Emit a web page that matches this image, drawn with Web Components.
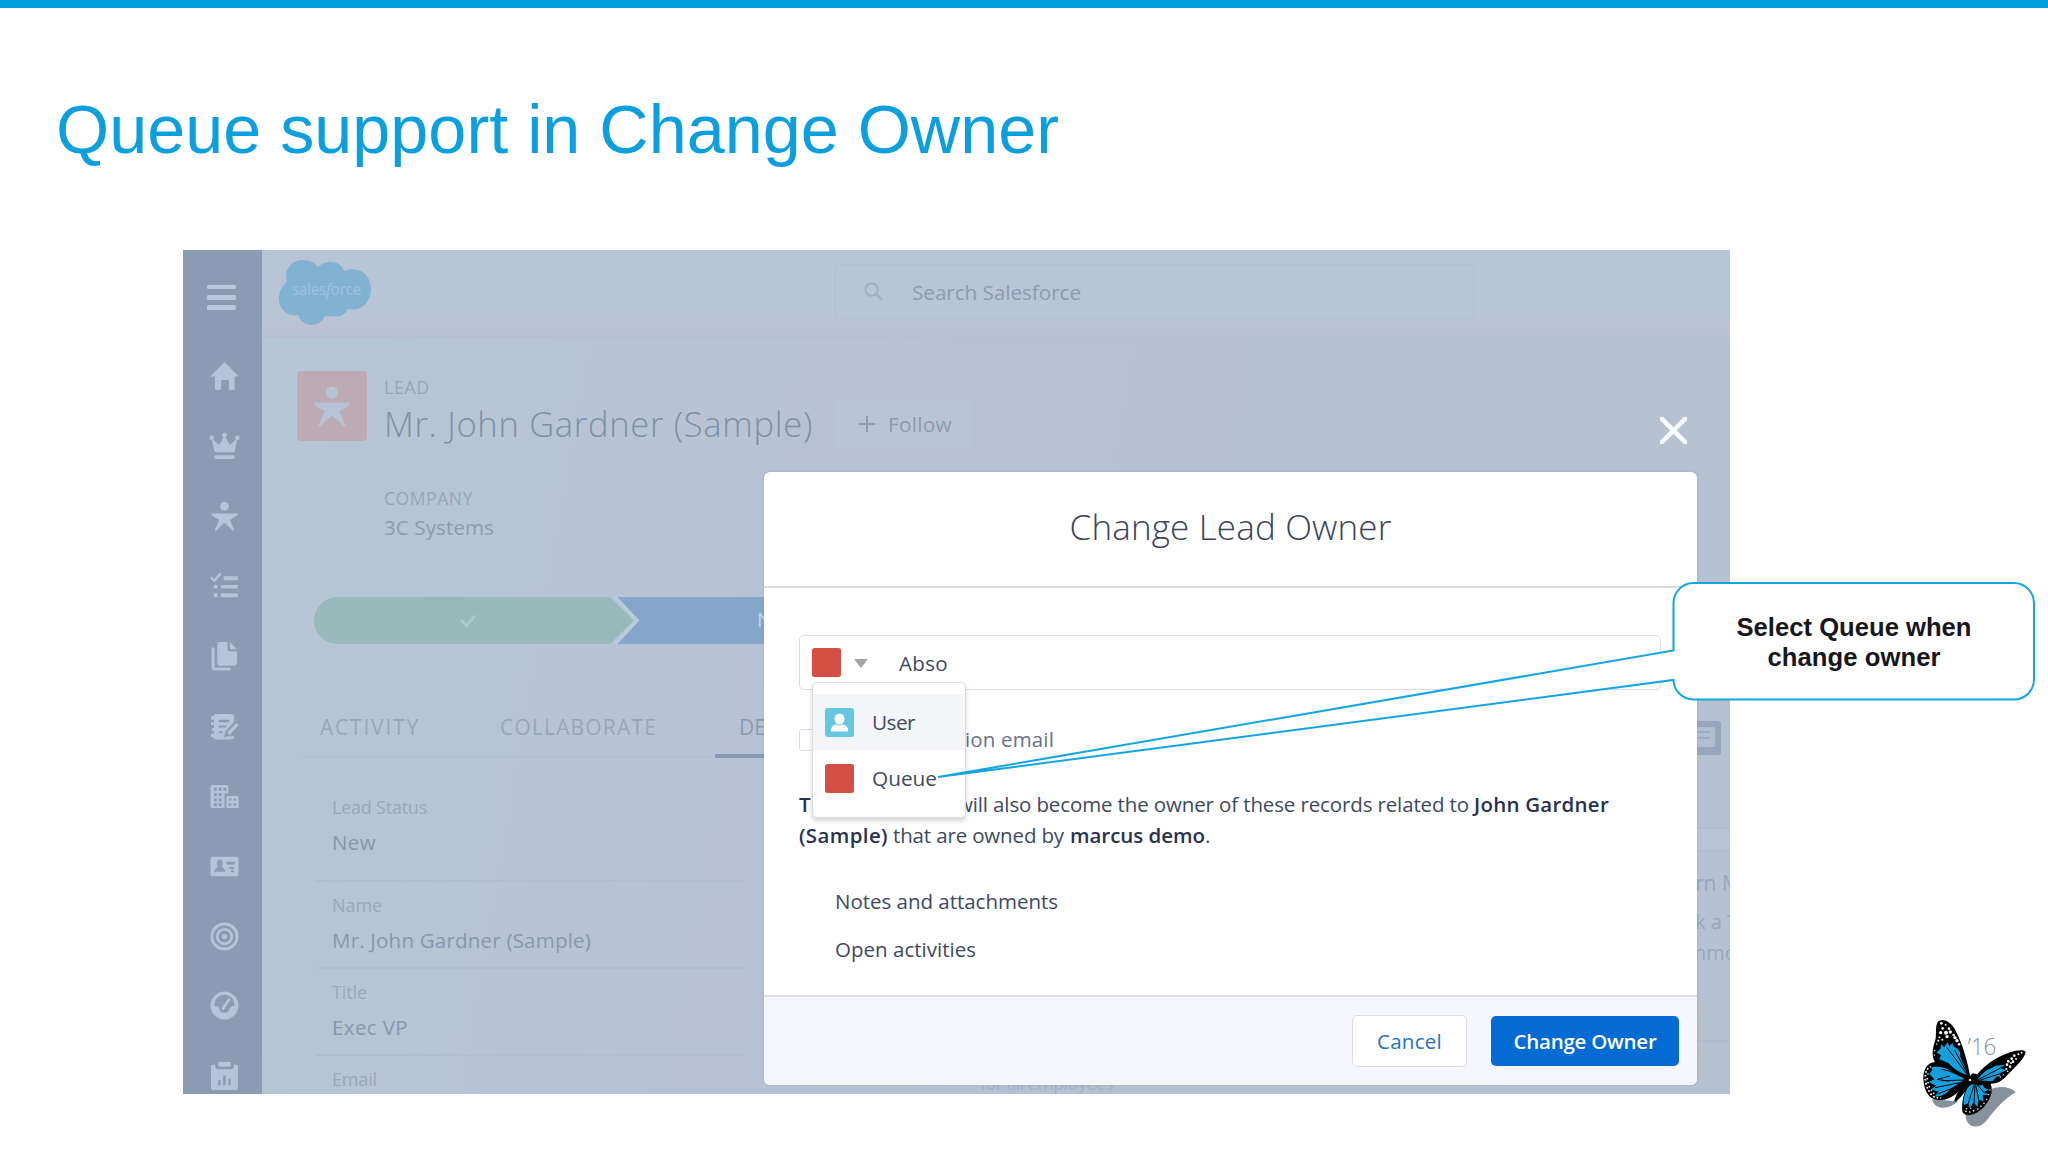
<!DOCTYPE html>
<html lang="en">
<head>
<meta charset="utf-8">
<title>Queue support in Change Owner</title>
<style>
  html, body {
    margin: 0;
    padding: 0;
    background: #fefefe;
  }
</style>
</head>
<body>
<slide-page heading="Queue support in Change Owner">
  <app-shot>
    <owner-modal slot="overlay"></owner-modal>
  </app-shot>
  <call-out slot="notes">
    <fit-text w="235">Select Queue when</fit-text>
    <fit-text w="173">change owner</fit-text>
  </call-out>
  <butterfly-mark slot="notes"></butterfly-mark>
</slide-page>

<script>
const ICONS = {
  home: '<path d="M15 0 L30 15 H25.500 V28 Q25.500 29 24.500 29 H19.500 V20 Q19.500 18.500 18 18.500 H13 Q11.500 18.500 11.500 20 V29 H6 Q5 29 5 28 V15 H0 Z"/>',
  crown: '<path d="M1.500 6 L4.500 20 Q4.700 21 6 21 H24 Q25.300 21 25.500 20 L28.500 6 L22 12.500 Q20.500 13.500 19.500 12 L15 3 L10.500 12 Q9.500 13.500 8 12.500 Z"/><circle cx="1.800" cy="6" r="2.300"/><circle cx="15" cy="3" r="2.500"/><circle cx="28.200" cy="6" r="2.300"/><rect x="4.500" y="24" width="21" height="4" rx="1.500"/>',
  lead: '<circle cx="15" cy="4.500" r="4.500"/><path d="M1.500 12 H28.500 Q29.500 13 28.500 13.800 L20.500 18.500 L25 29 Q24.500 30 23.500 29.500 L15 21.500 L6.500 29.500 Q5.500 30 5 29 L9.500 18.500 L1.500 13.800 Q.5 13 1.500 12Z"/>',
  list: '<path d="M1 5.500 L4.500 9 L11 1.500" fill="none" stroke="currentColor" stroke-width="2.600"/><rect x="14" y="4.500" width="15" height="4" rx="1.500"/><rect x="4" y="13.500" width="4" height="3.500" rx="1"/><rect x="11" y="13.500" width="18" height="3.500" rx="1.500"/><rect x="4" y="22" width="4" height="4" rx="1"/><rect x="11" y="22" width="18" height="4" rx="1.500"/>',
  files: '<path d="M10 0 H18 V6.500 Q18 9.500 21 9.500 H28 V22 Q28 24.500 25.500 24.500 H10 Q7.500 24.500 7.500 22 V2.500 Q7.500 0 10 0Z"/><path d="M20.500 0 L28 7.500 H22 Q20.500 7.500 20.500 6Z"/><path d="M3.200 7 V25.500 Q3.200 28 6 28 H20" fill="none" stroke="currentColor" stroke-width="3.200" stroke-linecap="round"/>',
  notes: '<path fill-rule="evenodd" d="M6 2 H22 Q25 2 25 5 V10 L16 20 L14.500 26 L19 25 H25 V26 Q24 28.500 22 28.500 H6 Q3.500 28.500 3.500 26 H1 V22.500 H4 V19.500 H2 V16.500 H4 V13.500 H1 V10.500 H4 V8 H1 V4.500 H3.500 Q4 2 6 2Z M9 8 V10.500 H20 V8Z M9 14 V16 H17 V14Z M9 20 V22 H13 V20Z"/><path d="M19 22.500 L28.500 12.500" stroke="currentColor" stroke-width="3.400"/>',
  building: '<path fill-rule="evenodd" d="M2 3 H17 Q19 3 19 5 V12 H15 V27 H2 Q.5 27 .5 25 V5 Q.5 3 2 3Z M4 6 V9 H7 V6Z M9 6 V9 H12 V6Z M14 6 V9 H17 V6Z M4 11.500 V14.500 H7 V11.500Z M9 11.500 V14.500 H12 V11.500Z M4 17 V20 H7 V17Z M9 17 V20 H12 V17Z M4 22 V25 H7 V22Z M9 22 V25 H12 V22Z M18 14.500 H28 Q29.500 14.500 29.500 16 V26 Q29.500 27 28 27 H17 V15.500Z M19.500 17 V19.500 H22 V17Z M24.500 17 V19.500 H27 V17Z M19.500 22 V24.500 H22 V22Z M24.500 22 V24.500 H27 V22Z"/>',
  contact: '<path fill-rule="evenodd" d="M2.500 5 H27.500 Q29.500 5 29.500 7 V23 Q29.500 25 27.500 25 H2.500 Q.5 25 .5 23 V7 Q.5 5 2.500 5Z M10 8 Q7 8 7 11.500 Q7 14 8.500 15.500 Q4.500 17 4.500 20.500 H16 Q16 17 12 15.500 Q13.200 14 13.200 11.500 Q13.200 8 10 8Z M17 10 V13 H26 V10Z M20 15.500 V17.500 H25 V15.500Z M21.500 19 V21 H25 V19Z"/>',
  target: '<g fill="none" stroke="currentColor"><circle cx="15" cy="15" r="13" stroke-width="3"/><circle cx="15" cy="15" r="7.500" stroke-width="2.800"/></g><circle cx="15" cy="15" r="2.700"/>',
  gauge: '<path fill-rule="evenodd" d="M15 .5 A14.500 14.500 0 1 1 14.900 .5Z M15 4 Q5 4.500 4.500 15.500 Q8 15 9.500 17.500 Q10 22.500 15 22.500 Q20 22.500 20.500 17.500 Q22 15 25.500 15.500 Q25 4.500 15 4Z"/><path d="M13.500 18 L19.500 9" stroke="currentColor" stroke-width="3" stroke-linecap="round"/>',
  report: '<path fill-rule="evenodd" d="M3 4 H5.500 V5.500 Q5.500 8.500 8.500 8.500 H21.500 Q24.500 8.500 24.500 5.500 V4 H27 Q29 4 29 6 V28 Q29 30 27 30 H3 Q1 30 1 28 V6 Q1 4 3 4Z M8.500 20 V25 H11 V20Z M13.700 15 V25 H16.300 V15Z M19 18 V25 H21.500 V18Z"/><rect x="8.500" y="1" width="13" height="5" rx="1.500"/>'
};

class AppIcon extends HTMLElement {
  constructor() {
    super();
    this.attachShadow({ mode: "open" });
  }

  connectedCallback() {
    this.shadowRoot.innerHTML = `
      <style>
        :host { display: block; width: 30px; height: 30px; }
        svg { display: block; width: 100%; height: 100%; overflow: visible; fill: currentColor; }
      </style>
      <svg viewBox="0 0 30 30">${ICONS[this.getAttribute("name")] || ""}</svg>
    `;
  }
}

class SideNav extends HTMLElement {
  constructor() {
    super();
    this.attachShadow({ mode: "open" });
  }

  connectedCallback() {
    const names = ["home", "crown", "lead", "list", "files", "notes", "building", "contact", "target", "gauge", "report"];
    this.shadowRoot.innerHTML = `
      <style>
        :host {
          display: block;
          box-sizing: border-box;
          width: 79px;
          height: 100%;
          flex: none;
          padding-top: 35px;
          background: #8a9bb3;
          color: #b4c5d9;
        }
        .burger {
          display: flex;
          flex-direction: column;
          gap: 5.800px;
          margin-left: 24px;
          width: 29px;
          height: 57px;
        }
        .burger i { height: 4.400px; border-radius: 1.500px; background: #b4c9dd; }
        nav { display: flex; flex-direction: column; }
        .item { height: 69.900px; display: flex; align-items: center; padding-left: 26.500px; }
        .item app-icon { width: 29px; height: 29px; }
      </style>
      <div class="burger"><i></i><i></i><i></i></div>
      <nav>${names.map((n) => `<div class="item"><app-icon name="${n}"></app-icon></div>`).join("")}</nav>
    `;
  }
}

class TopBar extends HTMLElement {
  constructor() {
    super();
    this.attachShadow({ mode: "open" });
  }

  connectedCallback() {
    this.shadowRoot.innerHTML = `
      <style>
        :host {
          display: flex;
          box-sizing: border-box;
          height: 88px;
          padding: 10px 0 0 17px;
          background: linear-gradient(#b8c5d7 0 68px, #bbc2d4 74px 84px, #b5bfd1 88px);
        }
        svg { display: block; overflow: visible; }
        .logo { width: 92px; height: 65px; flex: none; }
        .logo text { font: 500 17px "Open Sans", sans-serif; fill: #a0c3db; }
        .search {
          box-sizing: border-box;
          display: flex;
          align-items: center;
          width: 641px;
          height: 55px;
          margin: 4px 0 0 463px;
          padding-left: 28px;
          border: 2px solid #b5c2d4;
          border-radius: 4px;
          color: #8c9bb0;
          font-size: 20.800px;
        }
        .search svg { width: 19px; height: 19px; margin-right: 29px; }
      </style>
      <svg class="logo" viewBox="0 0 92 65">
        <path fill="#81b2d1" d="M8 22 C4 7 15 0 24 0 C31 0 36 3 39 7 C43 3 48 2 52 2 C58 2 63 5 65 11 C81 5 92 16 92 29 C92 43 81 52 69 49 C66 55 60 58 54 56 C50 57 48 56 46 56 C43 62 38 65 33 65 C26 65 21 61 19 55 C8 57 0 49 0 39 C0 31 3 26 8 22Z"/>
        <text x="13" y="35" textLength="69" lengthAdjust="spacingAndGlyphs">sales<tspan font-style="italic">f</tspan>orce</text>
      </svg>
      <div class="search">
        <svg viewBox="0 0 20 20" fill="none" stroke="#a3b1c4" stroke-width="2.300"><circle cx="8" cy="8" r="6.500"/><path d="M12.500 12.500 L19 19"/></svg>
        <fit-text w="169">Search Salesforce</fit-text>
      </div>
    `;
  }
}

class RecordHeader extends HTMLElement {
  constructor() {
    super();
    this.attachShadow({ mode: "open" });
  }

  connectedCallback() {
    this.shadowRoot.innerHTML = `
      <style>
        :host { display: flex; gap: 17px; height: 226px; padding: 33px 0 0 35px; }
        .avatar {
          display: flex;
          align-items: center;
          justify-content: center;
          width: 70px;
          height: 70px;
          flex: none;
          border-radius: 4px;
          background: #bcabb3;
          color: #b8c4d5;
        }
        .avatar app-icon { width: 40px; height: 41px; }
        .label { height: 20px; line-height: 20px; font-size: 17.500px; color: #97a5b8; }
        .value { height: 22px; line-height: 22px; font-size: 20.500px; color: #8b9bb0; }
        .head { padding-top: 6px; }
        .name { display: flex; align-items: center; gap: 23px; height: 40px; margin-top: 7px; }
        h2 { margin: 0; font-size: 34.500px; line-height: 40px; font-weight: 350; color: #7f8fa6; }
        .follow {
          box-sizing: border-box;
          display: flex;
          align-items: center;
          gap: 13px;
          width: 136px;
          height: 48px;
          padding-left: 23px;
          border-radius: 4px;
          background: #b9c4d6;
          color: #8b9bb1;
          font-size: 20.800px;
        }
        .company { margin-top: 44px; }
        .company .value { margin-top: 8px; }
      </style>
      <div class="avatar"><app-icon name="lead"></app-icon></div>
      <div>
        <div class="head">
          <div class="label"><fit-text w="46">LEAD</fit-text></div>
          <div class="name">
            <h2><fit-text w="429">Mr. John Gardner (Sample)</fit-text></h2>
            <div class="follow">
              <svg width="16" height="16" viewBox="0 0 16 16" stroke="currentColor" stroke-width="2"><path d="M8 0V16M0 8H16"/></svg>
              <fit-text w="64">Follow</fit-text>
            </div>
          </div>
        </div>
        <div class="company">
          <div class="label"><fit-text w="89">COMPANY</fit-text></div>
          <div class="value"><fit-text w="110">3C Systems</fit-text></div>
        </div>
      </div>
    `;
  }
}

class StagePath extends HTMLElement {
  constructor() {
    super();
    this.attachShadow({ mode: "open" });
  }

  connectedCallback() {
    this.shadowRoot.innerHTML = `
      <style>
        :host { display: block; height: 47px; margin: 0 0 0 52px; }
        svg { display: block; width: 1416px; height: 47px; }
        text { font: 20px "Open Sans", sans-serif; fill: #c3d4e6; }
      </style>
      <svg viewBox="0 0 1416 47">
        <path fill="#97b9ba" d="M23.500 0 H293 Q296 0 298 2 L320 23.500 L298 45 Q296 47 293 47 H23.500 A23.500 23.500 0 0 1 23.500 0Z"/>
        <path fill="#85a5ca" d="M303 0 H1416 V47 H303 L324 23.500Z"/>
        <path fill="none" stroke="#b7ccdb" stroke-width="3.500" d="M301 0 L323 23.500 L301 47"/>
        <path fill="none" stroke="#a9cbc6" stroke-width="2.600" d="M147 23 L152.500 28.500 L161 18.500"/>
        <text x="443" y="30">New</text>
      </svg>
    `;
  }
}

class RecordField extends HTMLElement {
  constructor() {
    super();
    this.attachShadow({ mode: "open" });
  }

  connectedCallback() {
    this.shadowRoot.innerHTML = `
      <style>
        :host {
          display: block;
          box-sizing: border-box;
          height: 87px;
          padding: 13px 0 0 16px;
          border-bottom: 2px solid #b1bed0;
        }
        .label { height: 20px; line-height: 20px; font-size: 18px; color: #9aa8ba; }
        .value { height: 24px; line-height: 24px; margin-top: 13px; font-size: 20.500px; color: #8797ad; }
      </style>
      <div class="label"><fit-text w="${this.getAttribute("lw")}">${this.getAttribute("label")}</fit-text></div>
      <div class="value"><slot></slot></div>
    `;
  }
}

class RecordDetail extends HTMLElement {
  constructor() {
    super();
    this.attachShadow({ mode: "open" });
  }

  connectedCallback() {
    this.shadowRoot.innerHTML = `
      <style>
        :host { display: flex; justify-content: space-between; padding-top: 53px; }
        .tabs {
          display: flex;
          box-sizing: border-box;
          width: 700px;
          height: 61px;
          margin-left: 38px;
          border-bottom: 2px solid #b3c0d1;
          font-size: 21px;
          line-height: 61px;
          color: #98a6b9;
        }
        .tabs div { box-sizing: border-box; height: 61px; padding-left: 20px; }
        .tabs div:first-child { width: 180px; }
        .tabs div:nth-child(2) { width: 235px; }
        .tabs .on { width: 285px; padding-left: 24px; color: #8a9ab1; border-bottom: 4px solid #8799b4; }
        .fields { width: 430px; margin: 26px 0 0 54px; }
        .fields record-field:first-child { height: 98px; }
        .side { width: 90px; flex: none; overflow: hidden; font-size: 20px; line-height: 24px; color: #9aa7ba; white-space: nowrap; }
        .book { box-sizing: border-box; width: 45px; height: 34px; margin: 24px 0 0 36px; border: 6px solid #98a6bc; border-radius: 3px; background: #b0bed0; border-bottom-width: 8px; }
        .book i { display: block; height: 2px; margin: 4px 5px 0 10px; background: #9dabc0; }
        .rule { box-sizing: border-box; height: 25px; margin-top: 72px; border: solid #b2becf; border-width: 2px 0; background: #b8c4d4; }
        .side p { margin: 0; width: 130px; }
        .rule2 { height: 2px; margin-top: 75px; background: #b0bccd; }
      </style>
      <div>
        <div class="tabs">
          <div><fit-text w="100">ACTIVITY</fit-text></div>
          <div><fit-text w="157">COLLABORATE</fit-text></div>
          <div class="on">DETAILS</div>
        </div>
        <div class="fields">
          <record-field label="Lead Status" lw="95"><fit-text w="44">New</fit-text></record-field>
          <record-field label="Name" lw="50"><fit-text w="259">Mr. John Gardner (Sample)</fit-text></record-field>
          <record-field label="Title" lw="35"><fit-text w="76">Exec VP</fit-text></record-field>
          <record-field label="Email" lw="45"></record-field>
        </div>
      </div>
      <div class="side">
        <div class="book"><i></i><i></i></div>
        <div class="rule"></div>
        <p style="margin-top:19px;padding-left:55px;font-size:21px">rn M</p>
        <p style="margin-top:15px;padding-left:55px">k a T</p>
        <p style="margin-top:7px;padding-left:54px">nmo</p>
        <div class="rule2"></div>
      </div>
    `;
  }
}

class AppShot extends HTMLElement {
  constructor() {
    super();
    this.attachShadow({ mode: "open" });
  }

  connectedCallback() {
    this.shadowRoot.innerHTML = `
      <style>
        :host {
          position: relative;
          display: flex;
          width: 1547px;
          height: 844px;
          overflow: hidden;
          font-family: "Open Sans", "Noto Sans", sans-serif;
          color: #8797ad;
        }
        main {
          flex: 1;
          min-width: 0;
          background: linear-gradient(100deg, #b5c6d4 0, #b7c4d4 20%, #b8c2d4 35%, #b7c1d2 60%, #b6c1d2 100%);
        }
        .under { position: absolute; left: 797px; bottom: -1px; font-size: 18px; line-height: 24px; color: #a6b2c4; }
      </style>
      <side-nav></side-nav>
      <main>
        <top-bar></top-bar>
        <record-header></record-header>
        <stage-path style="margin-top:-.5px"></stage-path>
        <record-detail></record-detail>
      </main>
      <div class="under"><fit-text w="133">for all employees</fit-text></div>
      <slot name="overlay"></slot>
    `;
  }
}

class OwnerMenu extends HTMLElement {
  constructor() {
    super();
    this.attachShadow({ mode: "open" });
  }

  connectedCallback() {
    this.shadowRoot.innerHTML = `
      <style>
        :host {
          position: absolute;
          left: 48px;
          top: 210px;
          box-sizing: border-box;
          width: 154px;
          height: 136px;
          padding-top: 11px;
          border: 1.500px solid #dcdde2;
          border-radius: 5px;
          background: #fefefe;
          box-shadow: 0 3px 4px rgba(0, 0, 0, .16);
        }
        .row { display: flex; align-items: center; gap: 18px; height: 56px; padding-left: 12px; font-size: 20.800px; color: #414a60; }
        .row.on { background: #f4f5f9; }
        .sq { width: 29px; height: 29px; border-radius: 2.500px; background: #d25043; }
        .sq.user { background: #65c8e0; }
        svg { display: block; fill: #fff; }
      </style>
      <div class="row on">
        <div class="sq user"><svg width="29" height="29" viewBox="0 0 29 29"><ellipse cx="14.500" cy="11" rx="5" ry="5.500"/><path d="M6 23.500 Q5.500 17 11.500 16.500 Q14.500 18.500 17.500 16.500 Q23.500 17 23 23.500 Z"/></svg></div>
        <fit-text w="43">User</fit-text>
      </div>
      <div class="row"><div class="sq"></div><fit-text w="65">Queue</fit-text></div>
    `;
  }
}

class OwnerModal extends HTMLElement {
  constructor() {
    super();
    this.attachShadow({ mode: "open" });
  }

  connectedCallback() {
    this.shadowRoot.innerHTML = `
      <style>
        :host {
          position: absolute;
          left: 581px;
          top: 222px;
          display: flex;
          flex-direction: column;
          width: 933px;
          height: 613px;
          border-radius: 6px;
          background: #fefefe;
          color: #3f495f;
          font-size: 20.500px;
          box-shadow: 0 0 3px rgba(90, 105, 130, .25);
        }
        .close { position: absolute; right: 10px; top: -55px; width: 27px; height: 27px; }
        header {
          box-sizing: border-box;
          display: flex;
          align-items: center;
          justify-content: center;
          height: 116px;
          padding-bottom: 5px;
          border-bottom: 2.500px solid #dadbe0;
          font-size: 35px;
          font-weight: 350;
          color: #3a4459;
        }
        .body { flex: 1; padding: 47px 36px 0 35px; }
        .input {
          box-sizing: border-box;
          display: flex;
          align-items: center;
          height: 55px;
          padding-left: 12px;
          border: 1.500px solid #dcdde3;
          border-radius: 5px;
        }
        .sq { width: 29px; height: 29px; border-radius: 2.500px; background: #d54f43; }
        .caret { margin: 2px 31px 0 13px; border: 7px solid transparent; border-top: 9px solid #a3a5ab; border-bottom: 0; }
        .check { display: flex; align-items: center; height: 22px; margin-top: 39px; color: #68728a; }
        .check fit-text { margin-top: -2px; }
        .box { box-sizing: border-box; width: 23px; height: 22px; margin-right: 143px; border: 1.500px solid #dcdde3; border-radius: 3px; }
        .text { margin-top: 38px; line-height: 31px; }
        .line { display: flex; }
        b { color: #28324e; font-weight: 650; }
        ul { list-style: none; margin: 34px 0 0 36px; padding: 0; line-height: 32px; }
        li + li { margin-top: 16px; }
        footer {
          box-sizing: border-box;
          display: flex;
          align-items: center;
          justify-content: flex-end;
          gap: 24px;
          height: 90px;
          padding: 0 18px 0 0;
          border-top: 2.500px solid #dddfe4;
          border-radius: 0 0 6px 6px;
          background: #f4f6fb;
        }
        .btn { box-sizing: border-box; display: flex; align-items: center; justify-content: center; border-radius: 5px; }
        .cancel { width: 115px; height: 52px; border: 1.500px solid #dcdee4; background: #fefefe; color: #2474c0; font-weight: 500; }
        .ok { width: 188px; height: 50px; background: #036bd3; color: #fff; font-weight: 600; }
      </style>
      <svg class="close" viewBox="0 0 27 27" fill="none" stroke="#f8fbff" stroke-width="4.500" stroke-linecap="round"><path d="M1.500 1.500 L25.500 25.500 M25.500 1.500 L1.500 25.500"/></svg>
      <header><fit-text w="322">Change Lead Owner</fit-text></header>
      <div class="body">
        <div class="input"><div class="sq"></div><div class="caret"></div><fit-text w="49">Abso</fit-text></div>
        <div class="check"><div class="box"></div><fit-text w="89">ion email</fit-text></div>
        <div class="text">
          <div class="line"><b style="width:158px">T</b><fit-text w="512">will also become the owner of these records related to</fit-text><b style="margin-left:5px"><fit-text w="135">John Gardner</fit-text></b></div>
          <div class="line"><b><fit-text w="89">(Sample)</fit-text></b><fit-text w="171" style="margin:0 6px 0 5px">that are owned by</fit-text><b><fit-text w="135">marcus demo</fit-text></b>.</div>
        </div>
        <ul>
          <li><fit-text w="223">Notes and attachments</fit-text></li>
          <li><fit-text w="141">Open activities</fit-text></li>
        </ul>
      </div>
      <footer>
        <div class="btn cancel"><fit-text w="65">Cancel</fit-text></div>
        <div class="btn ok"><fit-text w="143">Change Owner</fit-text></div>
      </footer>
      <owner-menu></owner-menu>
    `;
  }
}

class CallOut extends HTMLElement {
  constructor() {
    super();
    this.attachShadow({ mode: "open" });
  }

  connectedCallback() {
    this.shadowRoot.innerHTML = `
      <style>
        :host {
          position: absolute;
          left: 936px;
          top: 582px;
          width: 1100px;
          height: 200px;
          font: 700 25.600px/30.500px "Liberation Sans", Arial, sans-serif;
          color: #17161b;
        }
        svg { position: absolute; left: 0; top: 0; }
        .label {
          position: relative;
          display: flex;
          flex-direction: column;
          align-items: center;
          width: 362px;
          margin-left: 737px;
          padding-top: 29.500px;
        }
      </style>
      <svg width="1100" height="200" viewBox="0 0 1100 200">
        <path fill="#fefefe" stroke="#12a5e2" stroke-width="2" d="M757.500 1 H1078 A20 20 0 0 1 1098 21 V97 A20 20 0 0 1 1078 117.500 H757.500 A20 20 0 0 1 737.500 98 L2 195 L737.500 68.500 V21 A20 20 0 0 1 757.500 1Z"/>
      </svg>
      <div class="label"><slot></slot></div>
    `;
  }
}

class ButterflyMark extends HTMLElement {
  constructor() {
    super();
    this.attachShadow({ mode: "open" });
  }

  connectedCallback() {
    // white speckles along the wing edges: x, y, radius
    const dots = [
      [124, 70, 4], [137, 74, 3], [128, 85, 4], [122, 98, 5], [138, 98, 6], [147, 86, 4], [151, 96, 5], [141, 110, 5],
      [118, 112, 3], [115, 122, 3], [161, 105, 4], [165, 113, 5], [171, 122, 5], [177, 133, 4], [127, 119, 3], [110, 132, 2],
      [104, 152, 2], [103, 165, 2], [91, 201, 2.500], [83, 206, 3], [78, 216, 3], [76, 227, 3], [84, 222, 2.500], [76, 239, 3],
      [82, 236, 2.500], [78, 251, 3], [84, 248, 2.500], [82, 263, 3], [88, 260, 2.500], [87, 273, 3], [94, 271, 2.500], [93, 283, 3],
      [101, 280, 2.500], [102, 290, 3], [112, 293, 2.500], [122, 294, 2], [365, 158, 3], [355, 163, 3], [343, 167, 4], [335, 176, 4],
      [348, 177, 3], [325, 184, 4], [333, 189, 3], [339, 185, 4], [321, 194, 4], [330, 200, 4], [319, 207, 3], [323, 214, 2.500],
      [310, 224, 2], [301, 231, 2], [270, 270, 2], [266, 284, 2], [260, 298, 2], [252, 310, 2.500], [243, 319, 2.500],
      [233, 327, 2.500], [221, 332, 2.500], [209, 336, 2.500], [198, 334, 2.500], [200, 326, 2], [212, 325, 2]
    ];
    this.shadowRoot.innerHTML = `
      <style>
        :host { position: absolute; left: 1900px; top: 1000px; width: 148px; height: 152px; }
        svg { display: block; width: 148px; height: 152px; }
        text { font: 300 69px "Open Sans", sans-serif; fill: #8d9095; }
      </style>
      <svg viewBox="0 0 444 456">
        <path fill="#87919b" d="M96 298 C103 330 145 332 174 304 Z"/>
        <path fill="#87919b" d="M196 340 C196 388 238 390 261 360 C285 328 315 295 348 276 C325 258 296 257 272 268 C270 310 240 345 196 340Z"/>
        <text x="203" y="165" textLength="86" lengthAdjust="spacingAndGlyphs">’16</text>
        <path d="M210 228 C204 190 188 130 163 85 C148 60 121 52 112 68 C104 84 112 110 103 130 C96 150 96 172 105 187 C84 186 69 208 70 237 C72 272 86 300 116 300 C150 303 180 276 207 240Z"/>
        <path d="M222 238 C240 205 285 172 330 157 C350 150 374 147 377 156 C373 177 344 203 322 225 C305 244 292 251 272 251 C282 276 268 308 242 330 C220 348 190 350 187 334 C184 306 192 276 206 248Z"/>
        <path d="M231 223 L218 220 L208 230 L196 246 C184 260 166 285 163 303 Q166 308 171 302 C188 286 204 265 215 249 L231 233Z"/>
        <g fill="#14a0df">
          <path d="M110 158 L122 145 L123 132 L133 142 L142 127 L148 139 L157 129 L160 139 C178 148 183 157 180 168 C188 188 199 208 202 225 C180 219 156 203 145 189 L118 178 L123 166Z"/>
          <path d="M88 222 L97 210 L94 201 C118 198 139 202 151 212 L190 233 L190 241 L151 268 C134 287 113 293 105 288 L116 275 L93 268 L108 257 L86 246 L103 238Z"/>
          <path d="M230 241 C245 222 260 208 274 205 L287 197 L316 194 L300 204 L319 211 L299 220 L302 230 L291 229 L277 244Z"/>
          <path d="M208 257 C220 250 229 251 233 257 L248 255 L254 264 L266 268 L254 275 L266 284 L248 286 L251 304 L236 300 L232 321 L220 307 L210 326 L205 310 L191 316 C190 294 196 270 208 257Z"/>
        </g>
        <path fill="none" stroke="#050608" stroke-width="3" d="M205 228 L140 142 M205 226 L164 150 M198 236 L148 213 L125 208 M150 228 L112 238 L148 244 M198 240 L125 242 M190 246 L105 263 M180 256 L115 281 M226 243 L300 205 M232 243 L304 220 M224 250 L204 312 M225 252 L222 312 M226 250 L237 303 M228 251 L255 280 L262 276"/>
        <circle cx="210" cy="240" r="4" fill="#d7d9dc"/>
        <g fill="#f5f7f8">${dots.map(([x, y, r]) => `<circle cx="${x}" cy="${y}" r="${r}"/>`).join("")}</g>
      </svg>
    `;
  }
}

class SlidePage extends HTMLElement {
  constructor() {
    super();
    this.attachShadow({ mode: "open" });
  }

  connectedCallback() {
    this.shadowRoot.innerHTML = `
      <style>
        :host {
          position: relative;
          display: block;
          box-sizing: border-box;
          width: 2048px;
          height: 1152px;
          overflow: hidden;
          border-top: 8px solid #009fe2;
          background: #fefefe;
        }
        h1 {
          margin: 0;
          height: 242px;
          padding: 81px 0 0 56px;
          box-sizing: border-box;
          font: 400 68.300px/80px "Liberation Sans", Arial, sans-serif;
          color: #0b9fdd;
        }
        .shot { margin-left: 183px; }
        /* notes are placed against the whole slide, top rule included */
        .notes { position: absolute; left: 0; top: -8px; width: 2048px; height: 1152px; }
      </style>
      <h1><fit-text w="1003">${this.getAttribute("heading")}</fit-text></h1>
      <div class="shot"><slot></slot></div>
      <div class="notes"><slot name="notes"></slot></div>
    `;
  }
}

// Spreads its text over the given width with letter-spacing.
class FitText extends HTMLElement {
  constructor() {
    super();
    this.attachShadow({ mode: "open" });
  }

  connectedCallback() {
    this.shadowRoot.innerHTML = `
      <style>
        :host { display: inline-block; white-space: nowrap; flex: none; }
      </style>
      <span><slot></slot></span>
    `;
    const w = parseFloat(this.getAttribute("w"));
    const span = this.shadowRoot.querySelector("span");
    const natural = span.getBoundingClientRect().width;
    const count = this.textContent.length;
    if (w && natural && count > 1) {
      span.style.letterSpacing = (w - natural) / count + "px";
    }
  }
}

customElements.define("app-icon", AppIcon);
customElements.define("side-nav", SideNav);
customElements.define("top-bar", TopBar);
customElements.define("record-header", RecordHeader);
customElements.define("stage-path", StagePath);
customElements.define("record-field", RecordField);
customElements.define("record-detail", RecordDetail);
customElements.define("owner-menu", OwnerMenu);
customElements.define("owner-modal", OwnerModal);
customElements.define("app-shot", AppShot);
customElements.define("call-out", CallOut);
customElements.define("butterfly-mark", ButterflyMark);
customElements.define("slide-page", SlidePage);
// last, so that every text already sits in its final styles when it is measured
customElements.define("fit-text", FitText);
</script>
</body>
</html>
